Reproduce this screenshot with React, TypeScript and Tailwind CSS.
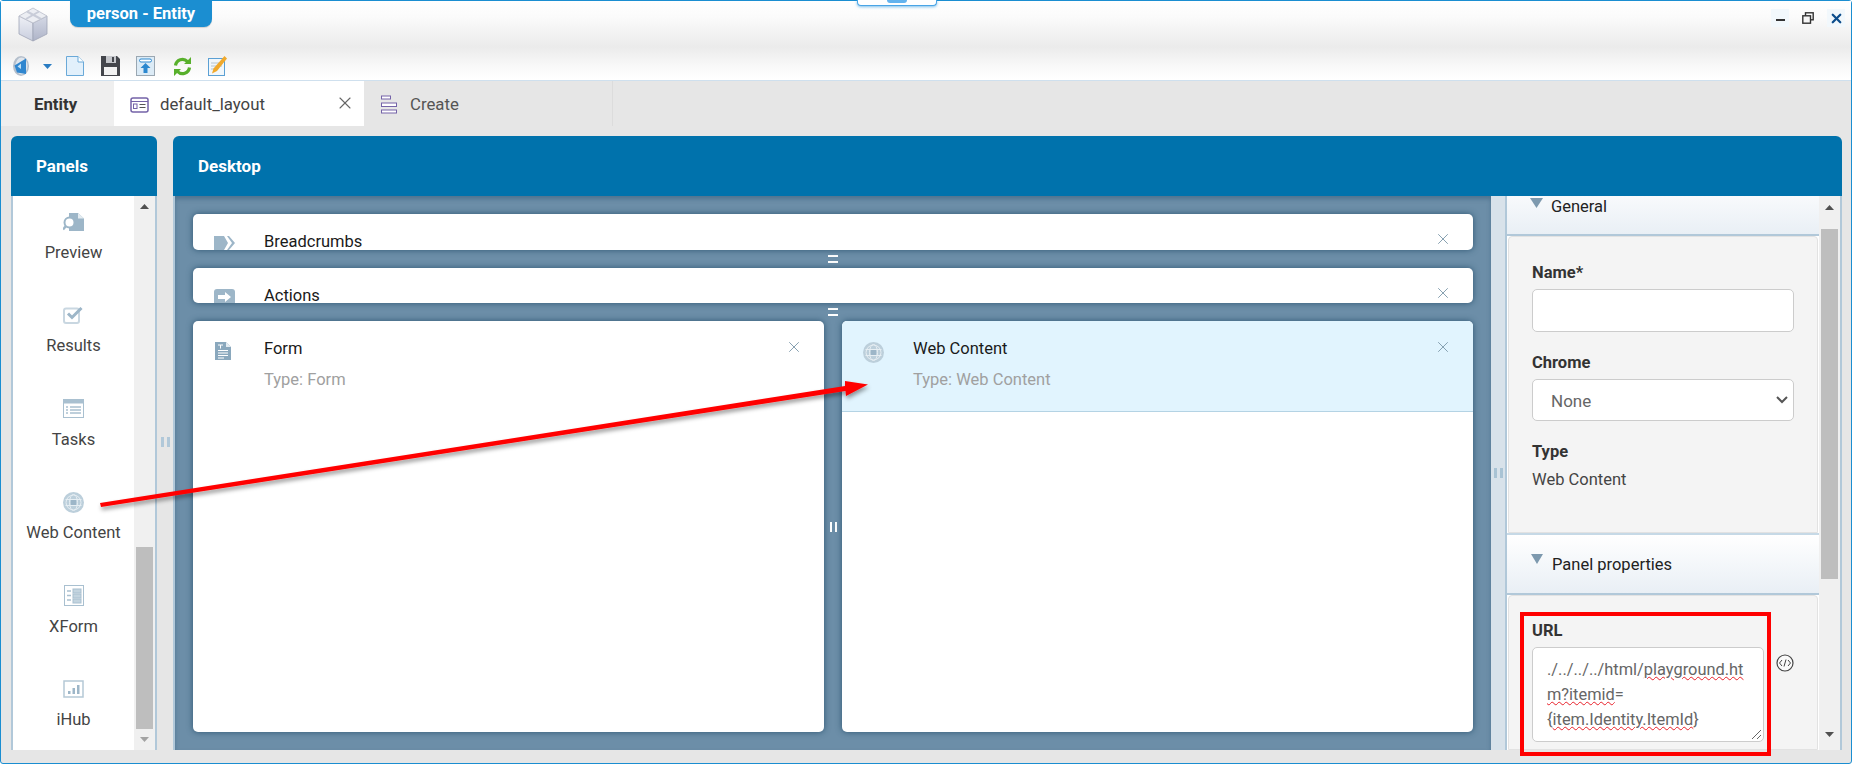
import { X } from "lucide-react"

const font = "font-['Roboto','Liberation_Sans',sans-serif]"

function PreviewIcon() {
  return (
    <svg width="21" height="18" viewBox="0 0 21 18">
      <path d="M6 0h9l6 5.500V18H6z" fill="#9db6c8" />
      <path d="M15 0l6 5.500h-6z" fill="#e4ecf1" />
      <circle cx="6.500" cy="9.500" r="5" fill="#fff" stroke="#9db6c8" strokeWidth="2" />
      <path d="M3 13l-3 3.500" stroke="#9db6c8" strokeWidth="2.500" />
    </svg>
  )
}

function ResultsIcon() {
  return (
    <svg width="21" height="17" viewBox="0 0 21 17">
      <rect x="1" y="1.500" width="15" height="14.500" rx="2" fill="none" stroke="#c9d7e1" strokeWidth="2" />
      <path d="M5 6.500l4 4L18.500 1" fill="none" stroke="#9db6c8" strokeWidth="3" />
    </svg>
  )
}

function TasksIcon() {
  return (
    <svg width="21" height="19" viewBox="0 0 21 19">
      <rect x="0.500" y="0.500" width="20" height="18" fill="#fff" stroke="#a9c0d0" />
      <rect x="0.500" y="0.500" width="20" height="4" fill="#a9c0d0" />
      <path d="M3 8h2M7 8h11M3 11h2M7 11h11M3 14h2M7 14h11" stroke="#a9c0d0" strokeWidth="1.500" />
    </svg>
  )
}

function GlobeIcon() {
  return (
    <svg width="21" height="21" viewBox="0 0 21 21">
      <circle cx="10.500" cy="10.500" r="10.500" fill="#bccfdb" />
      <circle cx="10.500" cy="10.500" r="7.500" fill="none" stroke="#e6eef3" />
      <ellipse cx="10.500" cy="10.500" rx="4" ry="8" fill="none" stroke="#e6eef3" />
      <path d="M2.500 7.500h16M2.500 13.500h16" stroke="#e6eef3" />
      <rect x="8" y="8" width="5" height="5" fill="#9db6c8" />
    </svg>
  )
}

function XFormIcon() {
  return (
    <svg width="20" height="21" viewBox="0 0 20 21">
      <rect x="0.500" y="0.500" width="19" height="20" fill="#fff" stroke="#a9c0d0" />
      <path d="M3 6h4M3 10.500h4M3 15h4" stroke="#a9c0d0" strokeWidth="1.500" />
      <rect x="9" y="4" width="8" height="4" fill="#c3d4df" stroke="#a9c0d0" />
      <rect x="9" y="9" width="8" height="4" fill="#c3d4df" stroke="#a9c0d0" />
      <rect x="9" y="14" width="8" height="4" fill="#c3d4df" stroke="#a9c0d0" />
    </svg>
  )
}

function HubIcon() {
  return (
    <svg width="21" height="18" viewBox="0 0 21 18">
      <rect x="1" y="1" width="19" height="16" fill="#fff" stroke="#b5c9d6" strokeWidth="1.500" />
      <rect x="5" y="11" width="2.500" height="3" fill="#9db6c8" />
      <rect x="9.500" y="8" width="2.500" height="6" fill="#9db6c8" />
      <rect x="14" y="5" width="2.500" height="9" fill="#9db6c8" />
    </svg>
  )
}

function CubeLogo() {
  return (
    <svg width="30" height="35" viewBox="0 0 30 35">
      <defs>
        <linearGradient id="cubeLeft" x1="0" y1="0" x2="0" y2="1">
          <stop offset="0" stopColor="#eef0f6" />
          <stop offset="1" stopColor="#c9cede" />
        </linearGradient>
        <linearGradient id="cubeRight" x1="0" y1="0" x2="0" y2="1">
          <stop offset="0" stopColor="#d5d9e6" />
          <stop offset="1" stopColor="#aeb4c8" />
        </linearGradient>
      </defs>
      <path d="M1 9L15 16v18L1 27z" fill="url(#cubeLeft)" stroke="#9fa5b6" strokeWidth=".8" />
      <path d="M29 9L15 16v18l14-7z" fill="url(#cubeRight)" stroke="#9fa5b6" strokeWidth=".8" />
      <path d="M1 9l14 7 14-7L15 1z" fill="#eceef3" stroke="#b9bdc9" strokeWidth=".8" />
      <path d="M9 4.500l14 7.500M21 4.500L8 12" stroke="#c8ccd8" strokeWidth="2" />
    </svg>
  )
}

const sideItems = [
  { label: "Preview", icon: <PreviewIcon /> },
  { label: "Results", icon: <ResultsIcon /> },
  { label: "Tasks", icon: <TasksIcon /> },
  { label: "Web Content", icon: <GlobeIcon /> },
  { label: "XForm", icon: <XFormIcon /> },
  { label: "iHub", icon: <HubIcon /> },
]

function Toolbar() {
  return (
    <div className="flex items-center h-[22px] pl-[12px]">
      <svg width="16" height="20" viewBox="0 0 16 20">
        <ellipse cx="8" cy="10" rx="8" ry="10" fill="#b4bfcc" />
        <ellipse cx="8.500" cy="10" rx="6" ry="8.500" fill="#dfe5ec" />
        <path d="M13 2.500L1.500 9.500 4 16.500l9 1.500z" fill="#2f86cf" />
        <path d="M8 7.500L4.500 10.500 8 13z" fill="#bfe0f7" />
      </svg>
      <svg className="ml-[14px]" width="9" height="5" viewBox="0 0 9 5">
        <path d="M0 0h9L4.500 5z" fill="#2a7cc2" />
      </svg>
      <svg className="ml-[14px]" width="18" height="20" viewBox="0 0 18 20">
        <path d="M.500 .500h11.500L17.500 6v13.500H.500z" fill="#e2f0fb" stroke="#6aa9d8" />
        <path d="M12 .500V6h5.500" fill="#fff" stroke="#6aa9d8" />
      </svg>
      <svg className="ml-[17px]" width="19" height="20" viewBox="0 0 19 20">
        <path d="M0 0h16l3 3v17H0z" fill="#44464c" />
        <rect x="5" y="0" width="10" height="7" fill="#c5c7cc" />
        <rect x="11" y="1" width="2" height="5" fill="#44464c" />
        <rect x="3" y="11" width="13" height="8" fill="#f2f2f2" />
      </svg>
      <svg className="ml-[16px]" width="19" height="20" viewBox="0 0 19 20">
        <rect x=".500" y=".500" width="18" height="19" fill="#dcebf6" stroke="#9aa7b2" />
        <rect x="3.500" y="3" width="12" height="3" rx="1.500" fill="#fff" stroke="#2c88cf" />
        <path d="M9.500 7l5 5h-3v5h-4v-5h-3z" fill="#2c88cf" />
      </svg>
      <svg className="ml-[18px]" width="19" height="19" viewBox="0 0 19 19">
        <path d="M2.500 8.500a7 7 0 0 1 12-4" fill="none" stroke="#58b02c" strokeWidth="3.200" />
        <path d="M16.500 10.500a7 7 0 0 1-12 4" fill="none" stroke="#58b02c" strokeWidth="3.200" />
        <path d="M11 7h7V0zM8 12H1v7z" fill="#58b02c" />
      </svg>
      <svg className="ml-[16px]" width="19" height="20" viewBox="0 0 19 20">
        <rect x=".500" y="2.500" width="16" height="17" fill="#f1f7fb" stroke="#5ba0d4" />
        <path d="M3 7h11M3 10h11M3 13h7" stroke="#b5c4cf" />
        <path d="M16.500 0L19 2.500 9 15l-5 2.500 1.500-5z" fill="#f0a92c" />
      </svg>
    </div>
  )
}

function Card({ icon, title, type, selected }: { icon?: React.ReactNode; title: string; type: string; selected?: boolean }) {
  return (
    <div className="flex-1 min-w-0 h-[411px] bg-white rounded-[5px] relative overflow-hidden shadow-[0_0_6px_rgba(35,75,105,0.85)]">
      <div className={`h-[91px] flex ${selected ? "bg-[#e1f4fe] border-b border-[#b4d3e4]" : ""}`}>
        <div className={`w-[71px] pt-[21px] shrink-0 ${selected ? "pl-[21px]" : "pl-[22px]"}`}>{icon}</div>
        <div className="pt-[18px]">
          <div className="text-[16.500px] leading-[20px] text-[#1a1a1a]">{title}</div>
          <div className="text-[16.500px] leading-[20px] text-[#a0a0a0] mt-[11px]">{type}</div>
        </div>
      </div>
      <X className="absolute right-[21px] top-[17px] text-[#7b96a8]" size={18} strokeWidth={1.200} />
    </div>
  )
}

function Strip({ title, icon, height }: { title: string; icon: React.ReactNode; height: string }) {
  return (
    <div className={`${height} bg-white rounded-[5px] relative overflow-hidden shrink-0 shadow-[0_0_6px_rgba(35,75,105,0.85)] flex`}>
      <div className="w-[71px] pl-[21px] pt-[22px] shrink-0">{icon}</div>
      <div className="text-[16.500px] leading-[15px] pt-[20px] text-[#1a1a1a]">{title}</div>
      <X className="absolute right-[21px] top-[16px] text-[#7b96a8]" size={18} strokeWidth={1.200} />
    </div>
  )
}

function HGrip() {
  return (
    <div className="h-[18px] shrink-0 flex flex-col items-center justify-center gap-[4px]">
      <div className="w-[10px] h-[2px] bg-white" />
      <div className="w-[10px] h-[2px] bg-white" />
    </div>
  )
}

function Squiggle({ children }: { children: React.ReactNode }) {
  return <span className="underline decoration-wavy decoration-[#e8202a] decoration-1">{children}</span>
}

export default function App() {
  return (
    <div className="w-[1854px] h-[765px] overflow-hidden bg-white">
      <div className={`${font} w-[1852px] h-[764px] relative bg-[#e6e6e6] border border-[#1b8ed1] rounded-[3px] flex flex-col`}>
        {/* title bar */}
        <div className="h-[80px] shrink-0 border-b border-[#cfe0ee] bg-[linear-gradient(#ffffff_0%,#fbfbfb_20%,#ebebeb_58%,#f8f8f8_82%,#ffffff_100%)] relative">
          <div className="flex h-[54px]">
            <div className="pl-[17px] pt-[6px]">
              <CubeLogo />
            </div>
            <div className="ml-[22px] h-[26px] w-[142px] bg-[#1b8ed1] rounded-b-[8px] text-white text-[16.500px] font-bold flex items-center justify-center shadow-[0_1px_1px_rgba(0,0,0,0.15)]">
              person - Entity
            </div>
          </div>
          <Toolbar />
          <div className="absolute right-[6px] top-[8px] flex items-center gap-[10px]">
            <div className="w-[18px] h-[18px] bg-[#f2f8fc] flex items-center justify-center">
              <div className="w-[9px] h-[2px] mt-[3px] bg-[#333]" />
            </div>
            <div className="w-[18px] h-[18px] flex items-center justify-center">
              <svg width="12" height="12" viewBox="0 0 12 12">
                <rect x="3.500" y=".800" width="7.700" height="7" fill="none" stroke="#333" strokeWidth="1.400" />
                <rect x=".800" y="3.800" width="7.700" height="7.400" fill="#f6f6f6" stroke="#333" strokeWidth="1.400" />
              </svg>
            </div>
            <div className="w-[18px] h-[18px] bg-[#f2f8fc] flex items-center justify-center">
              <X className="text-[#0d4d8c]" size={15} strokeWidth={3.600} />
            </div>
          </div>
        </div>

        {/* tabs */}
        <div className="h-[45px] shrink-0 flex text-[16.800px]">
          <div className="w-[113px] bg-[#efefef] flex items-center pl-[33px] pt-[2px] font-bold text-[#333]">Entity</div>
          <div className="w-[250px] bg-white flex items-center pl-[16px] pt-[2px] text-[#444] relative">
            <svg width="19" height="16" viewBox="0 0 19 16">
              <rect x="1" y="1" width="17" height="14" rx="2" fill="none" stroke="#7463a8" strokeWidth="1.500" />
              <path d="M1 4.500h17" stroke="#7463a8" />
              <rect x="3.500" y="7" width="3.500" height="4.500" fill="none" stroke="#7463a8" />
              <path d="M9.500 7.500h6M9.500 10.500h6" stroke="#555" />
            </svg>
            <span className="ml-[11px]">default_layout</span>
            <X className="absolute right-[9px] top-[12px] text-[#666]" size={20} strokeWidth={1.300} />
          </div>
          <div className="w-[249px] border-r border-[#dcdcdc] flex items-center pl-[17px] pt-[2px] text-[#555]">
            <svg width="17" height="19" viewBox="0 0 17 19">
              <rect x=".500" y="1" width="9" height="3" fill="#fff" stroke="#7463a8" />
              <rect x=".500" y="8" width="15" height="3.500" fill="#fff" stroke="#7463a8" />
              <rect x=".500" y="15" width="15" height="3" fill="#fff" stroke="#7463a8" />
            </svg>
            <span className="ml-[12px]">Create</span>
          </div>
        </div>

        {/* main */}
        <div className="flex pl-[10px] pr-[9px] pt-[10px] flex-1 min-h-0">
          {/* panels */}
          <div className="w-[146px] shrink-0 flex flex-col">
            <div className="h-[60px] bg-[#0072ac] rounded-t-[6px] text-white text-[17px] font-bold flex items-center pl-[25px] pt-[2px]">Panels</div>
            <div className="h-[554px] flex border-x-2 border-[#b1c8d9] bg-white overflow-hidden">
              <div className="w-[121px] shrink-0 pt-[15px] text-center text-[16.500px] leading-[20px] text-[#444]">
                {sideItems.map((it) => (
                  <div key={it.label} className="h-[93.400px] flex flex-col items-center">
                    <div className="h-[22px] flex items-center">{it.icon}</div>
                    <div className="mt-[10px]">{it.label}</div>
                  </div>
                ))}
              </div>
              <div className="flex-1 bg-[#f0f0f0] flex flex-col items-center">
                <div className="h-[21px] flex items-center">
                  <svg width="9" height="5" viewBox="0 0 9 5"><path d="M0 5h9L4.500 0z" fill="#505050" /></svg>
                </div>
                <div className="w-[17px] h-[182px] mt-[330px] bg-[#bebebe]" />
                <div className="h-[21px] flex items-center">
                  <svg width="9" height="5" viewBox="0 0 9 5"><path d="M0 0h9L4.500 5z" fill="#a3a3a3" /></svg>
                </div>
              </div>
            </div>
          </div>

          {/* splitter */}
          <div className="w-[16px] shrink-0 flex justify-center gap-[3px] pt-[301px]">
            <div className="w-[3px] h-[10px] bg-[#b1c8d9]" />
            <div className="w-[3px] h-[10px] bg-[#b1c8d9]" />
          </div>

          {/* desktop */}
          <div className="flex-1 min-w-0 flex flex-col">
            <div className="h-[60px] bg-[#0072ac] rounded-t-[6px] text-white text-[17px] font-bold flex items-center pl-[25px] pt-[2px]">Desktop</div>
            <div className="h-[554px] flex bg-[#6c8ea8]">
              {/* canvas */}
              <div className="flex-1 min-w-0 border-l-2 border-[#b1c8d9] pl-[18px] pr-[18px] pt-[18px] flex flex-col shadow-[inset_0_3px_4px_rgba(50,90,120,0.5)]">
                <Strip
                  title="Breadcrumbs"
                  height="h-[36px]"
                  icon={
                    <svg width="21" height="14" viewBox="0 0 21 14">
                      <path d="M0 0h10l4 7-4 7H0z M13 0h2l6 7-6 7h-2l5-7z" fill="#9db6c8" />
                    </svg>
                  }
                />
                <HGrip />
                <Strip
                  title="Actions"
                  height="h-[35px]"
                  icon={
                    <svg className="-mt-px" width="21" height="14" viewBox="0 0 21 14">
                      <rect width="21" height="20" rx="3" fill="#9db6c8" />
                      <path d="M4 6h7V3l6 5-6 5v-3H4z" fill="#fff" />
                    </svg>
                  }
                />
                <HGrip />
                <div className="flex">
                  <Card
                    title="Form"
                    type="Type: Form"
                    icon={
                      <svg width="16" height="18" viewBox="0 0 16 18">
                        <path d="M0 0h11l5 5v13H0z" fill="#8aa8bd" />
                        <path d="M11 0l5 5h-5z" fill="#e4ecf1" />
                        <path d="M3 3h5M5.500 3v3.500M3 8.500h10M3 11h10M3 13.500h10M3 16h6" stroke="#fff" />
                      </svg>
                    }
                  />
                  <div className="w-[18px] shrink-0 flex items-center justify-center gap-[3px]">
                    <div className="w-[2px] h-[10px] bg-white" />
                    <div className="w-[2px] h-[10px] bg-white" />
                  </div>
                  <Card title="Web Content" type="Type: Web Content" selected icon={<GlobeIcon />} />
                </div>
              </div>

              {/* splitter */}
              <div className="w-[16px] shrink-0 bg-[#d8e2ea] border-r-2 border-[#b1c8d9] flex items-center justify-center gap-[3px]">
                <div className="w-[3px] h-[10px] bg-[#a9c3d4]" />
                <div className="w-[3px] h-[10px] bg-[#a9c3d4]" />
              </div>

              {/* properties */}
              <div className="w-[335px] shrink-0 flex bg-white border-r-2 border-[#b1c8d9]">
                <div className="w-[312px] shrink-0 text-[#333] text-[16.500px]">
                  <div className="h-[40px] pl-[23px] flex bg-[linear-gradient(#f8fafc,#e9eff5)] border-b-2 border-[#b1c8d9] text-[#222]">
                    <svg className="mt-[2px]" width="13" height="10" viewBox="0 0 13 10"><path d="M0 0h13L6.500 10z" fill="#7d99ae" /></svg>
                    <span className="ml-[8px] mt-[1px] leading-[20px]">General</span>
                  </div>
                  <div className="h-[297px] mx-[1px] bg-[#f4f4f4] border border-[#e2e2e2] rounded-t-[4px] pl-[23px] pt-[26px]">
                    <div className="font-bold leading-[20px]">Name*</div>
                    <div className="h-[43px] mt-[6px] w-[262px] bg-white border border-[#cccccc] rounded-[5px]" />
                    <div className="font-bold leading-[20px] mt-[21px]">Chrome</div>
                    <div className="h-[42px] mt-[6px] w-[262px] bg-white border border-[#cccccc] rounded-[5px] flex items-center justify-between pl-[18px] pr-[5px] text-[#666]">
                      <span className="text-[17px] mt-[4px]">None</span>
                      <svg width="12" height="8" viewBox="0 0 12 8"><path d="M1 1l5 5 5-5" fill="none" stroke="#555" strokeWidth="2" /></svg>
                    </div>
                    <div className="font-bold leading-[20px] mt-[21px]">Type</div>
                    <div className="leading-[20px] mt-[8px] text-[#444]">Web Content</div>
                  </div>
                  <div className="h-[62px] pl-[24px] pt-[20px] flex bg-[linear-gradient(#ffffff,#e9eff5)] border-y-2 border-[#b1c8d9] border-t-[#c6d9e6] text-[#222]">
                    <svg className="-mt-[1px]" width="12" height="10" viewBox="0 0 12 10"><path d="M0 0h12L6 10z" fill="#7d99ae" /></svg>
                    <span className="ml-[9px] leading-[20px]">Panel properties</span>
                  </div>
                  <div className="h-[155px] mx-[1px] bg-[#f4f4f4] border border-[#e2e2e2] rounded-t-[4px] pl-[23px] pt-[25px] relative">
                    <div className="font-bold leading-[20px]">URL</div>
                    <div className="flex items-start mt-[6px]">
                      <div className="w-[232px] h-[95px] bg-white border border-[#cccccc] rounded-[5px] pl-[14px] pt-[9px] text-[16.400px] leading-[25px] text-[#666] whitespace-nowrap relative">
                        ./../../../html/<Squiggle>playground.ht</Squiggle>
                        <br />
                        <Squiggle>m?itemid</Squiggle>=
                        <br />
                        {"{"}
                        <Squiggle>item.Identity.ItemId</Squiggle>
                        {"}"}
                        <svg className="absolute right-[1px] bottom-[1px]" width="11" height="11" viewBox="0 0 11 11">
                          <path d="M1 10L10 1M6 10l4-4" stroke="#666" />
                        </svg>
                      </div>
                      <svg className="ml-[12px] mt-[7px]" width="18" height="18" viewBox="0 0 18 18">
                        <circle cx="9" cy="9" r="8" fill="#fafafa" stroke="#444" strokeWidth="1.200" />
                        <path d="M6 6L3.500 9 6 12M12 6l2.500 3L12 12M10 5.500l-2 7" fill="none" stroke="#444" />
                      </svg>
                    </div>
                    {/* red highlight drawn over the screenshot */}
                    <div className="absolute left-[11px] top-[16px] w-[251px] h-[144px] border-[4px] border-[#ff0000]" />
                  </div>
                </div>
                <div className="flex-1 bg-[#f0f0f0] flex flex-col items-center">
                  <div className="h-[33px] pt-[9px]">
                    <svg width="9" height="5" viewBox="0 0 9 5"><path d="M0 5h9L4.500 0z" fill="#505050" /></svg>
                  </div>
                  <div className="w-[17px] h-[350px] bg-[#bebebe]" />
                  <div className="flex-1" />
                  <div className="h-[20px] flex items-start pt-[2px]">
                    <svg width="9" height="5" viewBox="0 0 9 5"><path d="M0 0h9L4.500 5z" fill="#505050" /></svg>
                  </div>
                </div>
              </div>
            </div>
          </div>
        </div>

        {/* drag annotation arrow */}
        <svg className="absolute left-[-1px] top-[-1px] pointer-events-none" width="1854" height="765">
          <defs>
            <filter id="arrowShadow" x="-5%" y="-30%" width="110%" height="160%">
              <feDropShadow dx="1" dy="3" stdDeviation="2" floodColor="#000" floodOpacity="0.4" />
            </filter>
          </defs>
          <path d="M100 503L845 386 845 381 868 384.500 846 396 845.500 391 101 507z" fill="#ff0000" filter="url(#arrowShadow)" />
        </svg>

        {/* top centre handle */}
        <div className="absolute left-[856px] top-[-1px] w-[80px] h-[6px] bg-white border border-t-0 border-[#4aa5e6] rounded-b-[4px] flex justify-center shadow-[0_1px_3px_rgba(70,165,230,0.7)]">
          <div className="w-[20px] h-[3px] rounded-b-full bg-[#63b3ee]" />
        </div>
      </div>
    </div>
  )
}
